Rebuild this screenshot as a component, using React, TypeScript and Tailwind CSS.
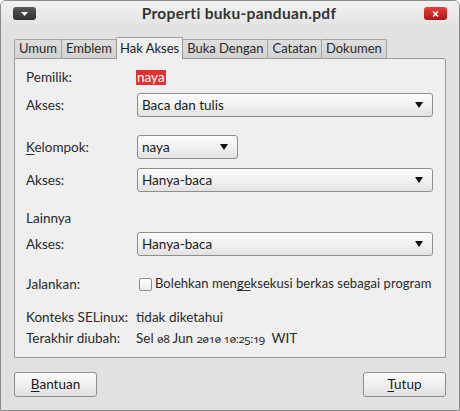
import React from "react";

function Combo({ text, w }: { text: string; w: string }) {
  return (
    <div
      className={`${w} h-[24px] flex items-center justify-between rounded-[3px] border border-[#8d8d8d] bg-gradient-to-b from-[#fbfbfb] via-[#f2f2f2] to-[#e2e2e2] pl-[4px] pr-[9px] shadow-[inset_0_1px_0_#ffffff]`}
    >
      <span className="text-[13.5px] text-[#1a1a1a]">{text}</span>
      <svg width="8" height="6" viewBox="0 0 8 6">
        <polygon points="0,0 8,0 4,6" fill="#111" />
      </svg>
    </div>
  );
}

function Tab({ label, active, first }: { label: string; active?: boolean; first?: boolean }) {
  if (active) {
    return (
      <div className="h-[22px] -mb-px -ml-px z-10 flex items-center px-[3px] border border-b-0 border-[#9a9a9a] rounded-t-[2px] bg-[#efefef] text-[13px] text-[#1a1a1a]">
        {label}
      </div>
    );
  }
  return (
    <div
      className={`h-[19px] flex items-center px-[4px] border border-b-0 border-[#a3a3a3] ${first ? "" : "-ml-px"} rounded-t-[2px] bg-gradient-to-b from-[#dedede] to-[#d2d2d2] text-[13px] text-[#2a2a2a]`}
    >
      {label}
    </div>
  );
}

function Button({ u, rest }: { u: string; rest: string }) {
  return (
    <div className="w-[83px] h-[25px] flex items-center justify-center rounded-[3px] border border-[#8d8d8d] bg-gradient-to-b from-[#fafafa] via-[#f0f0f0] to-[#e0e0e0] text-[13.5px] text-[#1a1a1a] shadow-[inset_0_1px_0_#ffffff]">
      <span>
        <span className="underline underline-offset-2">{u}</span>
        {rest}
      </span>
    </div>
  );
}

const numStyle = { fontFamily: '"Noto Sans", sans-serif' };

export default function App() {
  return (
    <div
      className="w-[460px] h-[411px] flex flex-col border border-[#8a8a8a] rounded-t-[6px] bg-[#e1e1e1] overflow-hidden"
      style={{ fontFamily: 'Lato, "Noto Sans", sans-serif' }}
    >
      {/* Title bar */}
      <div className="h-[25px] flex items-center justify-between pl-[12px] pr-[12px] bg-gradient-to-b from-[#f2f2f2] to-[#e3e3e3]">
        <div className="w-[23px] h-[13px] rounded-[3px] bg-gradient-to-b from-[#5a5a5a] to-[#2e2e2e] flex items-center justify-center">
          <svg width="7" height="4" viewBox="0 0 7 4">
            <polygon points="0,0 7,0 3.5,4" fill="#fff" />
          </svg>
        </div>
        <div className="ml-[18px] text-[15.5px] font-bold text-[#333] tracking-[0.3px]">Properti buku-panduan.pdf</div>
        <div className="w-[23px] h-[13px] rounded-[3px] bg-gradient-to-b from-[#e84040] to-[#b01010] flex items-center justify-center">
          <svg width="7" height="6" viewBox="0 0 7 6">
            <path d="M1 0.5 L6 5.5 M6 0.5 L1 5.5" stroke="#fff" strokeWidth="1.5" />
          </svg>
        </div>
      </div>

      <div className="flex-1 flex flex-col px-[13px] pt-[10px]">
        {/* Tabs */}
        <div className="flex items-end h-[22px]">
          <Tab label="Umum" first />
          <Tab label="Emblem" />
          <Tab label="Hak Akses" active />
          <Tab label="Buka Dengan" />
          <Tab label="Catatan" />
          <Tab label="Dokumen" />
        </div>

        {/* Panel */}
        <div className="h-[300px] border border-[#9a9a9a] rounded-tr-[3px] bg-[#efefef] pl-[11px] pr-[12px] pt-[8px] text-[13.5px] text-[#2a2a2a]">
          <div className="h-[20px] flex items-center">
            <div className="w-[110px] shrink-0">Pemilik:</div>
            <span className="bg-[#e03232] text-white px-[1px] leading-[15px]">naya</span>
          </div>
          <div className="h-[24px] mt-[6px] flex items-center">
            <div className="w-[111px] shrink-0">Akses:</div>
            <Combo text="Baca dan tulis" w="w-[296px]" />
          </div>
          <div className="h-[24px] mt-[18px] flex items-center">
            <div className="w-[111px] shrink-0">
              <span className="underline underline-offset-2">K</span>elompok:
            </div>
            <Combo text="naya" w="w-[101px]" />
          </div>
          <div className="h-[24px] mt-[9px] flex items-center">
            <div className="w-[111px] shrink-0">Akses:</div>
            <Combo text="Hanya-baca" w="w-[296px]" />
          </div>
          <div className="h-[20px] mt-[16px] flex items-center">Lainnya</div>
          <div className="h-[24px] mt-[4px] flex items-center">
            <div className="w-[111px] shrink-0">Akses:</div>
            <Combo text="Hanya-baca" w="w-[296px]" />
          </div>
          <div className="h-[20px] mt-[18px] flex items-center whitespace-nowrap">
            <div className="w-[113px] shrink-0">Jalankan:</div>
            <div className="w-[13px] h-[13px] shrink-0 border border-[#8d8d8d] rounded-[2px] bg-gradient-to-b from-white to-[#ececec] mr-[3px]" />
            <span className="text-[13px] tracking-[0.05px]">
              Bolehkan men<span className="underline underline-offset-2">g</span>
              <span className="underline underline-offset-2">e</span>ksekusi berkas sebagai program
            </span>
          </div>
          <div className="h-[20px] mt-[13px] flex items-center">
            <div className="w-[110px] shrink-0">Konteks SELinux:</div>
            <span>tidak diketahui</span>
          </div>
          <div className="h-[20px] mt-[1px] flex items-center">
            <div className="w-[110px] shrink-0">Terakhir diubah:</div>
            <span>
              Sel{" "}
              <span className="slashed-zero oldstyle-nums text-[11.5px] tracking-[-0.4px]" style={numStyle}>
                08
              </span>{" "}
              Jun{" "}
              <span className="slashed-zero oldstyle-nums text-[11.5px] tracking-[-0.4px]" style={numStyle}>
                2010 10:25:19
              </span>
              &nbsp;&nbsp;WIT
            </span>
          </div>
        </div>

        {/* Buttons */}
        <div className="flex justify-between mt-[14px]">
          <Button u="B" rest="antuan" />
          <Button u="T" rest="utup" />
        </div>
      </div>
    </div>
  );
}
